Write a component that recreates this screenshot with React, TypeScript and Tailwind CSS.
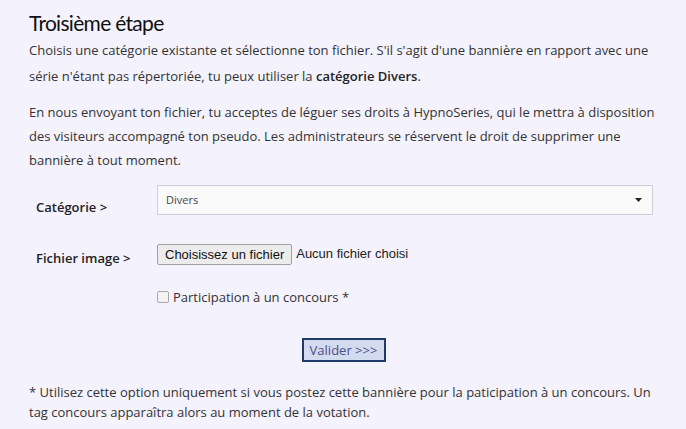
export default function App() {
  return (
    <div className="min-h-[429px] w-full bg-[#f4f2fc] px-[29px] pt-[9px] text-[13px] leading-[24px] text-[#333] [font-family:'Open_Sans',sans-serif]">
      <h1 className="text-[21px] leading-[28px] tracking-[-0.7px] text-[#111] [font-family:Lato,sans-serif]">Troisième étape</h1>

      <p className="leading-[26px]">
        Choisis une catégorie existante et sélectionne ton fichier. S'il s'agit d'une bannière en rapport avec une série n'étant pas répertoriée, tu peux utiliser la <b className="font-semibold text-[#222]">catégorie Divers</b>.
      </p>

      <p className="mt-[11px]">
        En nous envoyant ton fichier, tu acceptes de léguer ses droits à HypnoSeries, qui le mettra à disposition des visiteurs accompagné ton pseudo. Les administrateurs se réservent le droit de supprimer une bannière à tout moment.
      </p>

      <div className="mt-[13px] flex flex-col">
        {/* catégorie */}
        <div className="flex items-start">
          <label className="mt-[10px] w-[128px] pl-[7px] font-semibold text-[#222]">Catégorie &gt;</label>
          <div className="flex h-[30px] w-[496px] items-center justify-between border border-[#cfcfd6] bg-[#fafafa] pl-[8px] pr-[10px] text-[11px] text-[#444]">
            <span>Divers</span>
            <svg width="7" height="4" viewBox="0 0 7 4"><path d="M0 0h7L3.5 4z" fill="#222" /></svg>
          </div>
        </div>

        {/* fichier */}
        <div className="mt-[23px] flex items-start">
          <label className="mt-[4px] w-[128px] pl-[7px] font-semibold text-[#222]">Fichier image &gt;</label>
          <div className="flex items-center gap-[4px] text-[13px] [font-family:Arial,'Liberation_Sans',sans-serif]">
            <button className="h-[21px] rounded-[2px] border border-[#a0a0a0] bg-[#ececec] px-[7px] leading-[19px] text-[#111]">Choisissez un fichier</button>
            <span className="text-[#222]">Aucun fichier choisi</span>
          </div>
        </div>

        <div className="mt-[15px] flex items-center pl-[128px]">
          <span className="h-[12px] w-[12px] rounded-[2px] border border-[#a8a8a8] bg-[#f4f4f4]"></span>
          <span className="ml-[4px] text-[#333]">Participation à un concours *</span>
        </div>

        <div className="mt-[29px] flex justify-center pl-[1px]">
          <button className="h-[24px] w-[84px] border-2 border-[#1f3b6c] bg-[#d3dbee] text-[13px] leading-[20px] text-[#4b4f8c]">Valider &gt;&gt;&gt;</button>
        </div>
      </div>

      <p className="mt-[20px] leading-[20px]">
        * Utilisez cette option uniquement si vous postez cette bannière pour la paticipation à un concours. Un tag concours apparaîtra alors au moment de la votation.
      </p>
    </div>
  );
}
